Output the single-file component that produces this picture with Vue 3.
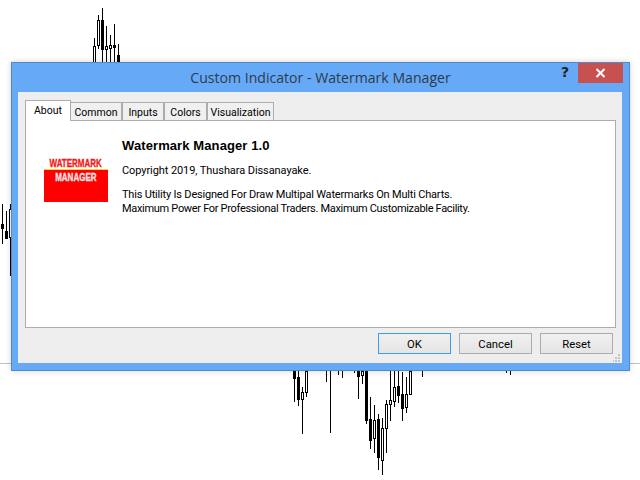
<script setup>
const candles = [
  // [x, wickTop, wickBottom, bodyTop, bodyBottom, filled]
  [94.5,38,62,46,62,0],[98.5,15,49,20,45,0],[102.5,8,62,20,49,1],[106.5,26,62,46,49,0],[110.5,35,62,45,48,0],[114.5,24,62,45,47,1],[118.5,44,62,55,62,1],
  [2.5,204,244,224,228,1],[6.5,211,239,231,238,1],[10.5,204,276,209,237,0],
  [294.5,371,402,371,378,1],[298.5,371,406,377,399,1],[302.5,387,434,392,399,0],[306.5,371,397,371,392,0],
  [326.5,371,382],[330.5,371,433],[338.5,371,375],[342.5,371,378],[354.5,371,373],
  [358.5,371,399,371,376,1],[362.5,371,384,371,375,0],[366.5,371,424,371,420,1],[370.5,397,449,419,440,1],
  [374.5,405,453,420,438,0],[378.5,414,470,419,457,1],[382.5,418,475,428,460,0],[386.5,400,453,404,428,0],
  [390.5,371,421,400,404,0],[394.5,371,407,387,401,0],[398.5,371,403,386,395,1],[402.5,372,421,394,408,1],
  [406.5,377,413,394,407,0],[410.5,371,394,371,394,0],[422.5,371,377],[506.5,371,373],[510.5,371,375]
]
const tabs = ['About', 'Common', 'Inputs', 'Colors', 'Visualization']
const buttons = ['OK', 'Cancel', 'Reset']
</script>

<template>
  <div class="desktop">
    <svg class="chart" width="640" height="480" viewBox="0 0 640 480">
      <line x1="0" y1="363.5" x2="640" y2="363.5" stroke="#c0c0c0" />
      <g v-for="(c, i) in candles" :key="i">
        <line :x1="c[0]" :y1="c[1]" :x2="c[0]" :y2="c[2]" stroke="#000" />
        <rect v-if="c[3] !== undefined" :x="c[0] - 1" :y="c[3] + 0.5" width="2" :height="c[4] - c[3]" :fill="c[5] ? '#000' : '#fff'" stroke="#000" />
      </g>
    </svg>

    <section class="window">
      <header class="titlebar">
        <span class="title">Custom Indicator - Watermark Manager</span>
        <span class="help">?</span>
        <span class="close">
          <svg width="11" height="10" viewBox="0 0 11 10"><path d="M1.5 1 L9.5 9 M9.5 1 L1.5 9" stroke="#fff" stroke-width="2" /></svg>
        </span>
      </header>
      <div class="client">
        <nav class="tabs">
          <span v-for="(t, i) in tabs" :key="t" class="tab" :class="['t' + i, { active: i === 0 }]">{{ t }}</span>
        </nav>
        <div class="panel">
          <div class="logo">
            <span class="mark">WATERMARK</span>
            <span class="mgr">MANAGER</span>
          </div>
          <div class="about">
            <h1>Watermark Manager 1.0</h1>
            <p class="copy">Copyright 2019, Thushara Dissanayake.</p>
            <p class="desc"><span class="l1">This Utility Is Designed For Draw Multipal Watermarks On Multi Charts.</span><br /><span class="l2">Maximum Power For Professional Traders. Maximum Customizable Facility.</span></p>
          </div>
        </div>
        <footer class="actions">
          <button v-for="(b, i) in buttons" :key="b" class="btn" :class="{ primary: i === 0 }">{{ b }}</button>
        </footer>
        <svg class="grip" width="8" height="8" viewBox="0 0 8 8" fill="#c4c4c4">
          <rect x="5" y="0" width="2" height="2" /><rect x="2" y="3" width="2" height="2" /><rect x="5" y="3" width="2" height="2" />
          <rect x="-1" y="6" width="2" height="2" /><rect x="2" y="6" width="2" height="2" /><rect x="5" y="6" width="2" height="2" />
        </svg>
      </div>
    </section>
  </div>
</template>

<style>
html, body { margin: 0; background: #fff; }
</style>

<style scoped>
.desktop {
  position: relative;
  width: 640px;
  height: 480px;
  overflow: hidden;
  background: #fff;
  font-family: Roboto, "Liberation Sans", sans-serif;
  color: #000;
}
.chart { position: absolute; left: 0; top: 0; }
.window {
  position: absolute;
  left: 11px;
  top: 62px;
  width: 619px;
  height: 309px;
  box-sizing: border-box;
  display: flex;
  flex-direction: column;
  background: #66a9f6;
  border: 1px solid #4f8bcb;
  box-shadow: 0 0 6px rgba(0, 0, 0, 0.18);
  padding: 0 7px 7px 6px;
}
.titlebar {
  position: relative;
  height: 29px;
  flex: none;
  display: flex;
  justify-content: center;
  align-items: center;
}
.title {
  font-family: "Open Sans", sans-serif;
  font-size: 14.1px;
  color: #2e3b4a;
  position: relative;
  left: 0.5px;
}
.help {
  position: absolute;
  right: 53px;
  top: 1px;
  font: bold 14px "DejaVu Sans", sans-serif;
  color: #222;
}
.close {
  position: absolute;
  right: -1px;
  top: 0;
  width: 45px;
  height: 20px;
  background: #c75050;
  display: flex;
  align-items: center;
  justify-content: center;
}
.client {
  position: relative;
  flex: 1;
  background: #eeeeee;
  display: flex;
  flex-direction: column;
  padding: 9px 6px 0 7px;
  min-height: 0;
}
.tabs {
  display: flex;
  align-items: flex-end;
  height: 20px;
  flex: none;
  position: relative;
  z-index: 1;
  margin-bottom: -1px;
}
.tab {
  box-sizing: border-box;
  height: 19px;
  border: 1px solid #acacac;
  background: #f0f0f0;
  font-size: 10.5px;
  line-height: 19px;
  text-align: center;
}
.t0 { width: 46px; }
.t1 { width: 51px; border-left-width: 0; }
.t2 { width: 42px; }
.t3 { width: 43px; }
.t4 { width: 67px; }
.tab.active {
  height: 21px;
  border-bottom: 0;
  background: #fff;
  line-height: 19px;
}
.panel {
  box-sizing: border-box;
  height: 208px;
  flex: none;
  background: #fff;
  border: 1px solid #acacac;
  display: flex;
  align-items: flex-start;
  padding: 0 0 0 18px;
}
.logo {
  flex: none;
  box-sizing: border-box;
  width: 64px;
  height: 44px;
  margin-top: 37px;
  background: linear-gradient(#fff 11px, #ffd23c 11px, #ffd23c 12px, #ff0000 12px);
  display: flex;
  flex-direction: column;
  align-items: center;
  font: bold 10px/10px "Liberation Sans", sans-serif;
}
.mark {
  margin-top: 1px;
  color: #f01818;
  -webkit-text-stroke: 0.3px #f01818;
  transform: scaleX(0.8);
  white-space: nowrap;
}
.mgr {
  margin-top: 4px;
  color: #ffe8e8;
  -webkit-text-stroke: 0.3px #ffe8e8;
  transform: scaleX(0.8);
  white-space: nowrap;
}
.about { margin-left: 14px; padding-top: 17px; font-size: 11px; }
.about h1 { margin: 0; font: bold 13px/16px "Liberation Sans", sans-serif; letter-spacing: 0.1px; }
.about p { margin: 0; line-height: 14px; }
.copy { margin-top: 10px !important; letter-spacing: -0.08px; }
.desc { margin-top: 10px !important; }
.l1 { letter-spacing: -0.19px; }
.l2 { letter-spacing: -0.31px; }
.actions {
  display: flex;
  justify-content: flex-end;
  gap: 8px;
  padding: 5px 3px 0 0;
}
.btn {
  box-sizing: border-box;
  width: 73px;
  height: 21px;
  padding: 1px 0 0;
  border: 1px solid #acacac;
  background: linear-gradient(#f0f0f0, #e5e5e5);
  font: 11.3px Roboto, "Liberation Sans", sans-serif;
  color: #000;
}
.btn.primary { border-color: #3c9cf0; }
.grip { position: absolute; right: 1px; bottom: 1px; }
</style>
